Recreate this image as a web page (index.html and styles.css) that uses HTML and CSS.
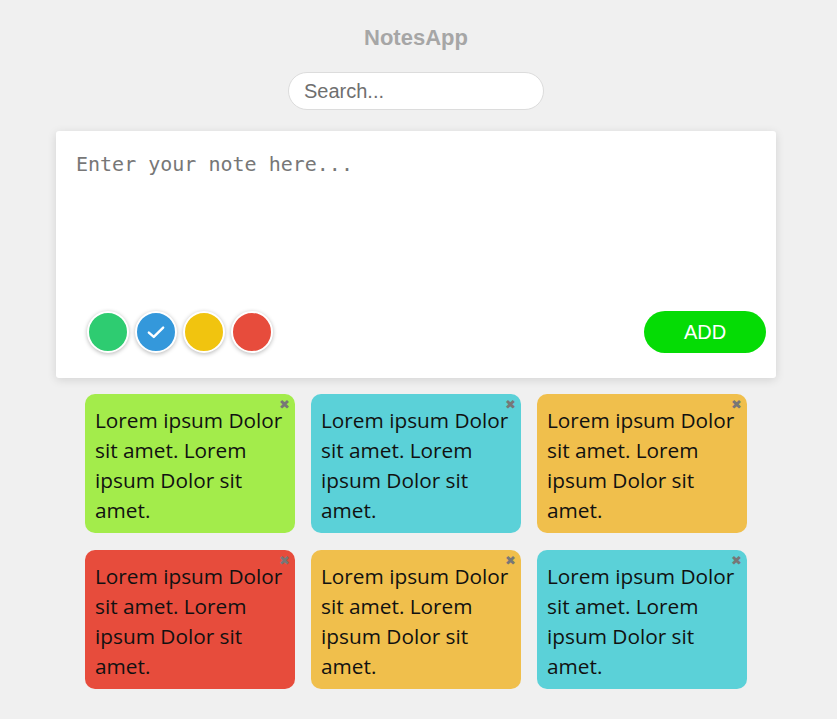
FILE: index.html
```html
<!DOCTYPE html>
<html lang="en">
<head>
<meta charset="utf-8">
<title>NotesApp</title>
<link rel="stylesheet" href="styles.css">
</head>
<body>
<div class="app">
  <h1 class="title">NotesApp</h1>
  <div class="search-wrap">
    <input class="search" type="text" placeholder="Search...">
  </div>
  <div class="editor">
    <textarea class="note-input" placeholder="Enter your note here..."></textarea>
    <div class="editor-bar">
      <div class="swatches">
        <span class="swatch green"></span>
        <span class="swatch blue selected">
          <svg viewBox="0 0 20 20" width="22" height="22"><path d="M3.5 10.5 L8 14.5 L16.5 6" fill="none" stroke="#fff" stroke-width="2.2" stroke-linecap="round" stroke-linejoin="round"/></svg>
        </span>
        <span class="swatch yellow"></span>
        <span class="swatch red"></span>
      </div>
      <button class="add">ADD</button>
    </div>
  </div>
  <div class="notes">
    <div class="note lime"><span class="close">✖</span>Lorem ipsum Dolor sit amet. Lorem ipsum Dolor sit amet.</div>
    <div class="note cyan"><span class="close">✖</span>Lorem ipsum Dolor sit amet. Lorem ipsum Dolor sit amet.</div>
    <div class="note orange"><span class="close">✖</span>Lorem ipsum Dolor sit amet. Lorem ipsum Dolor sit amet.</div>
    <div class="note tomato"><span class="close">✖</span>Lorem ipsum Dolor sit amet. Lorem ipsum Dolor sit amet.</div>
    <div class="note orange"><span class="close">✖</span>Lorem ipsum Dolor sit amet. Lorem ipsum Dolor sit amet.</div>
    <div class="note cyan"><span class="close">✖</span>Lorem ipsum Dolor sit amet. Lorem ipsum Dolor sit amet.</div>
  </div>
</div>
</body>
</html>
```
FILE: styles.css
```css
html, body {
  margin: 0;
  padding: 0;
  background: #f0f0f0;
}
.app {
  width: 832px;
  display: flex;
  flex-direction: column;
  align-items: center;
  font-family: "Liberation Sans", Arial, sans-serif;
}
.title {
  margin: 24px 0 0;
  font-size: 22px;
  line-height: 28px;
  font-weight: bold;
  color: #a6a6a6;
}
.search-wrap {
  margin-top: 20px;
}
.search {
  box-sizing: border-box;
  width: 256px;
  height: 38px;
  border: 1px solid #dcdcdc;
  border-radius: 19px;
  background: #fff;
  padding: 0 15px;
  font-family: "Liberation Sans", Arial, sans-serif;
  font-size: 20px;
  color: #333;
  outline: none;
}
.search::placeholder { color: #6f6f6f; }
.editor {
  box-sizing: border-box;
  margin-top: 21px;
  width: 720px;
  height: 247px;
  background: #fff;
  border-radius: 3px;
  box-shadow: 0 2px 10px rgba(0,0,0,0.12);
  padding: 20px 10px 25px 20px;
  display: flex;
  flex-direction: column;
}
.note-input {
  flex: 1;
  border: none;
  outline: none;
  resize: none;
  padding: 0;
  margin: 0;
  font-family: "DejaVu Sans Mono", "Liberation Mono", monospace;
  font-size: 20px;
  line-height: 26px;
  color: #333;
}
.note-input::placeholder { color: #777; }
.editor-bar {
  display: flex;
  align-items: center;
  justify-content: space-between;
  padding-left: 11px;
}
.swatches {
  display: flex;
  gap: 6px;
}
.swatch {
  box-sizing: border-box;
  width: 42px;
  height: 42px;
  border-radius: 50%;
  border: 2px solid #fff;
  box-shadow: 0 1px 4px rgba(0,0,0,0.28);
  display: flex;
  align-items: center;
  justify-content: center;
}
.green { background: #2ecc71; }
.blue { background: #3498db; }
.yellow { background: #f1c40f; }
.red { background: #e74c3c; }
.add {
  width: 122px;
  height: 42px;
  border: none;
  border-radius: 21px;
  background: #05dc05;
  color: #fff;
  font-family: "Liberation Sans", Arial, sans-serif;
  font-size: 20px;
  cursor: pointer;
}
.notes {
  margin-top: 16px;
  display: grid;
  grid-template-columns: repeat(3, 210px);
  column-gap: 16px;
  row-gap: 17px;
}
.note {
  position: relative;
  box-sizing: border-box;
  height: 139px;
  border-radius: 10px;
  padding: 11px 8px 0 10px;
  font-family: "Open Sans", "Noto Sans", sans-serif;
  font-size: 20.8px;
  line-height: 30px;
  color: #111;
}
.close {
  position: absolute;
  top: 4px;
  right: 5px;
  font-size: 13px;
  line-height: 14px;
  color: #777;
  font-family: "DejaVu Sans", sans-serif;
}
.lime { background: #a3ec4b; }
.cyan { background: #5bd1d8; }
.orange { background: #f0bf4c; }
.tomato { background: #e74c3c; }
```
